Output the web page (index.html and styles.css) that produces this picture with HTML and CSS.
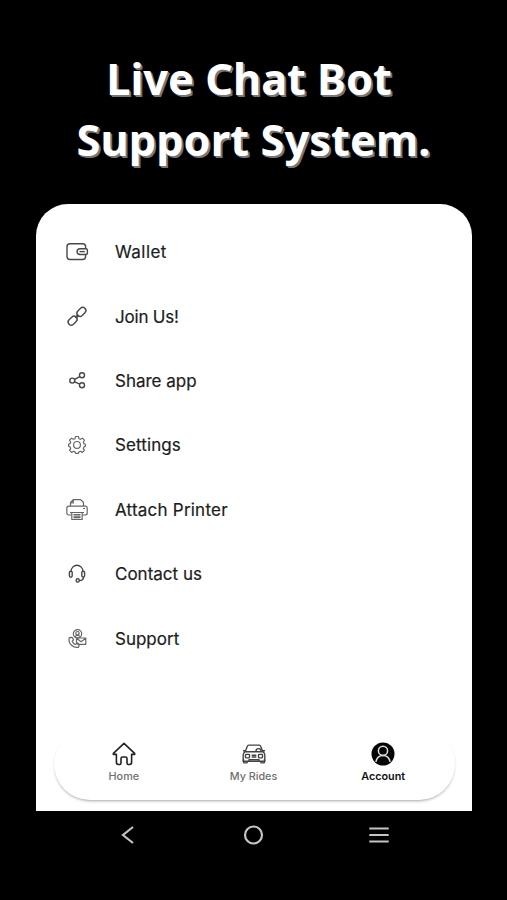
FILE: index.html
```
<!doctype html>
<html lang="en">
<head>
<meta charset="utf-8">
<title>Account</title>
<link rel="stylesheet" href="styles.css">
</head>
<body>
	<h1 class="title"><span class="line1">Live Chat Bot</span><br><span class="line2">Support System.</span></h1>
	<div class="screen">
		<ul class="menu">
			<li>
				<svg class="icon" viewBox="0 0 24 24">
					<rect x="2" y="3.700" width="18.600" height="15.800" rx="3"/>
					<path d="M20.800 8.700H15a2.900 2.900 0 0 0 0 5.800h5.800q1.600 0 1.600-1.500v-2.800q0-1.500-1.600-1.500z" fill="#fff"/>
					<path d="M14.500 11.600h5.300"/>
				</svg>
				<span class="wallet">Wallet</span>
			</li>
			<li>
				<svg class="icon" viewBox="0 0 24 24">
					<rect x="-5" y="-3.100" width="10" height="6.200" rx="3.100" transform="translate(16.400 6.900) rotate(-45)"/>
					<rect x="-5" y="-3.100" width="10" height="6.200" rx="3.100" transform="translate(7.600 15.700) rotate(-45)"/>
					<path d="M10.500 12.800l3-3" stroke-width="2.400"/>
				</svg>
				<span class="join">Join Us!</span>
			</li>
			<li>
				<svg class="icon" viewBox="0 0 24 24">
					<circle cx="7.300" cy="11.600" r="2.500"/>
					<circle cx="17" cy="6.300" r="2.500"/>
					<circle cx="17" cy="16.300" r="2.500"/>
					<path d="M9.700 10.300l5-2.700M9.700 12.800l5 2.300"/>
				</svg>
				<span>Share app</span>
			</li>
			<li>
				<svg class="icon thin" viewBox="0 0 24 24">
					<path d="M10.600 3.500h2.800l.6 2.200 1.400.6 2-1.100 2 2-1.100 2 .6 1.400 1.500.6v2.100l-1.500.7-.6 1.400 1.100 2-2 2-2-1.100-1.400.6-.6 1.400h-2.800l-.6-1.400-1.400-.6-2 1.100-2-2 1.100-2-.6-1.400-1.500-.7v-2.100l1.500-.6.6-1.400-1.100-2 2-2 2 1.100 1.400-.6z"/>
					<circle cx="12" cy="11.900" r="3.400"/>
				</svg>
				<span class="settings">Settings</span>
			</li>
			<li>
				<svg class="icon thin" viewBox="0 0 24 24">
					<path d="M5.500 8.200V4.500l2.800-2.900h7.400l2.800 2.900v3.700M5.500 5h2.800V1.700M6.500 17H3.800a2 2 0 0 1-2-2v-4.800a2 2 0 0 1 2-2h16.400a2 2 0 0 1 2 2V15a2 2 0 0 1-2 2h-2.700M18.200 10.500H20"/>
					<path d="M5 14.500h14M6.800 14.500h10.400v7H6.800zM8.500 16.500h7M8.500 18.100h7M8.500 19.700h7"/>
				</svg>
				<span class="printer">Attach Printer</span>
			</li>
			<li>
				<svg class="icon" viewBox="0 0 24 24">
					<path d="M6 9.500a6 6.200 0 0 1 12 0M18.500 14.700c0 2.500-1.700 3.900-4.300 3.900"/>
					<rect x="4.400" y="9.200" width="2.800" height="6" rx="1.400"/>
					<rect x="16.800" y="9.200" width="2.800" height="6" rx="1.400"/>
					<circle cx="12.700" cy="18.400" r="1.600"/>
				</svg>
				<span>Contact us</span>
			</li>
			<li>
				<svg class="icon thin" viewBox="0 0 24 24">
					<circle cx="12.500" cy="6.800" r="4.200"/>
					<circle cx="12.500" cy="6.200" r="1.700"/>
					<path d="M9.500 9.800q3-2.600 6 0"/>
					<path d="M4.300 10.600l2.800-.3 1.500 2.600-1.400 1.300c.6 1.600 1.700 2.700 3.200 3.300l1.500-1.100 2.200 1.900-.6 2c-5.300.8-10.800-3.600-9.200-9.700z"/>
					<path d="M11.500 11h9.300v6.300h-6.800l-2.500-2zM11.500 11.300l4.600 3.400 4.700-3.400"/>
				</svg>
				<span>Support</span>
			</li>
		</ul>
		<div class="tabs">
			<div class="tab">
				<svg class="tab-icon home" viewBox="0 0 24 24">
					<path d="M12 1.300L1.400 11.400q-.5.800.5 1h2.500v8.200q0 1.900 1.900 1.900h1.400q1.300 0 1.300-1.500v-4.500q0-1.500 1.500-1.500h3q1.500 0 1.500 1.500V21q0 1.500 1.300 1.500h1.400q1.900 0 1.900-1.900v-8.200h2.500q1-.2.500-1z"/>
				</svg>
				<span>Home</span>
			</div>
			<div class="tab">
				<svg class="tab-icon" viewBox="0 0 24 24">
					<path d="M3.200 9.700l2-5.300q.4-1.300 1.700-1.300h10.200q1.300 0 1.700 1.300l2 5.300M1 8.800h2.500M20.500 8.800H23M3.200 9.700h17.600q2 1.200 2 3.300v6.300H1.200V13q0-2.100 2-3.300z"/>
					<path d="M1.500 17v3q0 .9.900.9h2q.9 0 .9-.9v-1M18.700 19v1q0 .9.900.9h2q.9 0 .9-.9v-3M14 8.900q0-2.300 2.500-2.300t2.500 2.300"/>
					<rect x="3.500" y="12.400" width="4" height="3.500" rx=".7"/>
					<rect x="16.500" y="12.400" width="4" height="3.500" rx=".7"/>
					<path d="M9.700 13.300h4.600M9.700 15h4.600M7 19v-1.200h10V19"/>
				</svg>
				<span>My Rides</span>
			</div>
			<div class="tab active">
				<svg class="tab-icon user" viewBox="0 0 24 24">
					<circle cx="12" cy="12" r="11.500" class="disc"/>
					<circle cx="12" cy="8.800" r="4.600"/>
					<path d="M4.900 19.800c.8-3.900 3.600-6.400 7.100-6.400s6.300 2.500 7.100 6.400"/>
				</svg>
				<span>Account</span>
			</div>
		</div>
	</div>
	<div class="system">
		<svg viewBox="0 0 24 24"><path d="M18 4L8 12l10 8"/></svg>
		<svg viewBox="0 0 24 24"><circle cx="12.500" cy="12" r="8.500"/></svg>
		<svg viewBox="0 0 24 24"><path d="M2.300 5.500h19.400M2.300 12h19.400M2.300 18.500h19.400"/></svg>
	</div>
</body>
</html>
```
FILE: styles.css
```
html,body{
	margin:0;
	height:100%;
}
body{
	background:#000;
	font-family:Inter, "Liberation Sans", sans-serif;
	overflow:hidden;
}
.title{
	margin:0;
	height:204px;
	box-sizing:border-box;
	padding-top:48px;
	text-align:center;
	font-family:"Noto Sans", "Open Sans", sans-serif;
	font-size:43.3px;
	font-weight:700;
	line-height:61px;
	color:#fff;
	text-shadow:1px 1px 0 #777, 2px 2px 0 #777;
}
.line1{
	margin-right:9px;
}
.line2{
	letter-spacing:0.1px;
}
.screen{
	width:436px;
	height:607px;
	margin-left:36px;
	box-sizing:border-box;
	padding-top:16px;
	display:flex;
	flex-direction:column;
	justify-content:space-between;
	background:#fff;
	border-radius:32px 32px 0 0;
}
.menu{
	margin:0;
	padding:0 0 0 29px;
	list-style:none;
}
.menu li{
	height:64.4px;
	display:flex;
	align-items:center;
	gap:26px;
	font-size:17px;
	-webkit-text-stroke:0.2px #1c1c1c;
	color:#1c1c1c;
}
.wallet{
	letter-spacing:0.45px;
}
.join{
	letter-spacing:-0.2px;
}
.settings{
	letter-spacing:0.1px;
}
.printer{
	letter-spacing:0.22px;
}
.icon{
	width:24px;
	height:24px;
	fill:none;
	stroke:#484848;
	stroke-width:1.4;
	stroke-linejoin:round;
}
.thin{
	stroke:#666;
	stroke-width:1.2;
}
.tabs{
	width:401px;
	height:72px;
	margin:0 0 11px 18px;
	box-sizing:border-box;
	padding:14px 7px 0 5px;
	display:flex;
	border-radius:36px;
	box-shadow:0 2px 3px -1px rgba(0,0,0,0.35);
}
.tab{
	flex:1;
	display:flex;
	flex-direction:column;
	align-items:center;
	gap:4px;
	font-size:10.8px;
	font-weight:500;
	line-height:14px;
	color:#707070;
}
.tab-icon{
	width:24px;
	height:24px;
	fill:none;
	stroke:#444;
	stroke-width:1.4;
	stroke-linejoin:round;
}
.home{
	stroke:#222;
	stroke-width:1.6;
}
.active{
	color:#111;
	font-weight:600;
}
.user{
	stroke:#ddd;
	stroke-width:1.5;
}
.disc{
	fill:#050505;
	stroke:none;
}
.system{
	height:48px;
	display:flex;
	justify-content:space-between;
	align-items:center;
	padding:0 116px 0 115px;
}
.system svg{
	width:24px;
	height:24px;
	fill:none;
	stroke:#c4c4c4;
	stroke-width:2.2;
}
```
